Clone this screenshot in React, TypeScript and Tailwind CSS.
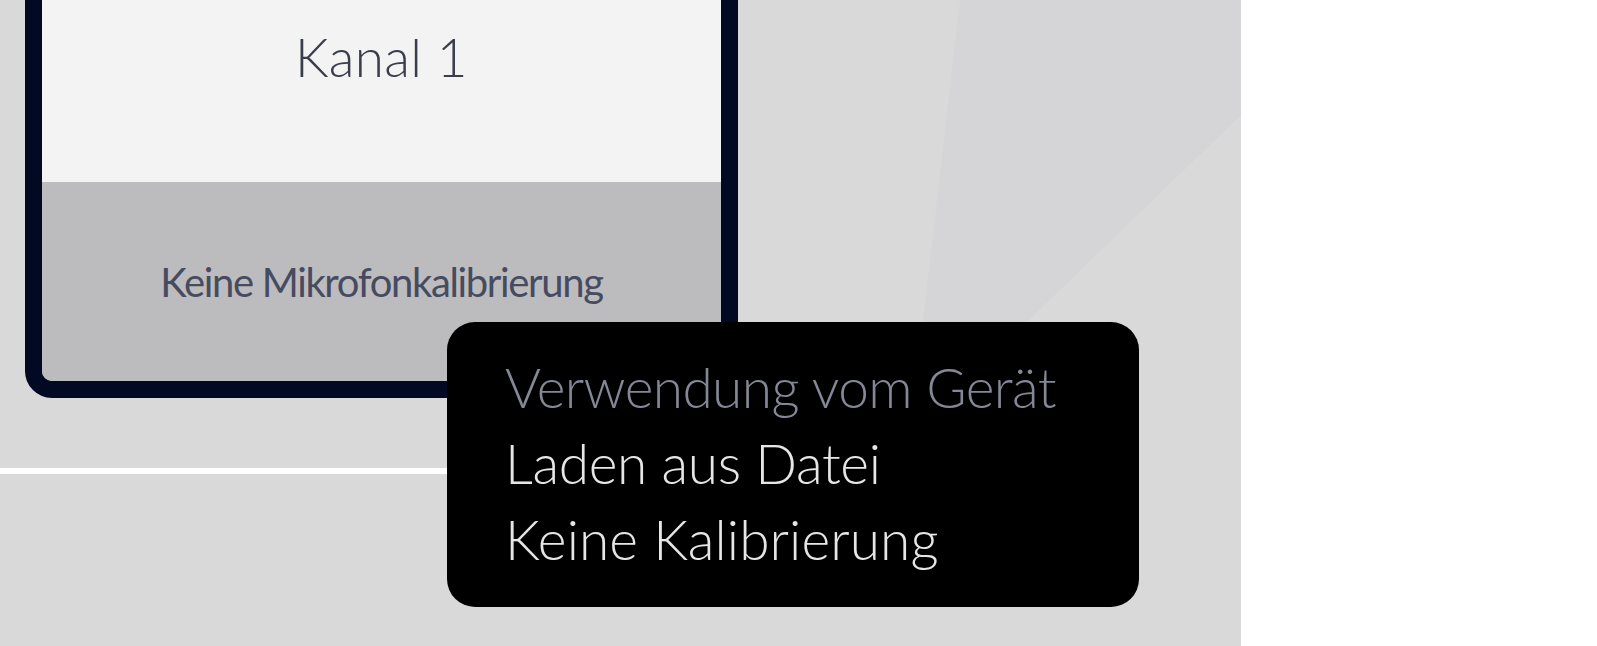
import React from "react";

export default function App() {
  return (
    <div className="flex h-[646px] w-full bg-white font-['Lato',_sans-serif]">
      <div className="relative flex h-full w-[1241px] shrink-0 flex-col overflow-hidden bg-[#d9d9d9]">
        <svg
          className="absolute left-0 top-0"
          width="1241"
          height="646"
          viewBox="0 0 1241 646"
        >
          <polygon points="960,0 1241,0 1241,115 910,435" fill="#d5d4d7" />
        </svg>

        <div className="relative -mt-[39px] ml-[25px] flex w-[713px] flex-col overflow-hidden rounded-[27px] border-[17px] border-[#020922]">
          <div className="flex h-[204px] justify-center bg-[#f3f3f3] pt-[52px]">
            <span className="text-[53px] font-light leading-[53px] tracking-[0.3px] text-[#393d4c]">
              Kanal 1
            </span>
          </div>
          <div className="flex h-[199px] items-center justify-center bg-[#bcbcbe]">
            <span className="text-[40px] leading-[40px] tracking-[-1.35px] text-[#474b60]">
              Keine Mikrofonkalibrierung
            </span>
          </div>
        </div>

        <div className="relative mt-[70px] h-[6px] w-[460px] bg-white" />

        <div className="absolute left-[447px] top-[322px] flex h-[285px] w-[692px] flex-col rounded-[28px] bg-black pl-[58px] pt-[27px]">
          <div className="text-[55px] font-light leading-[76px] tracking-[-0.6px] text-[#848795]">
            Verwendung vom Gerät
          </div>
          <div className="text-[55px] font-light leading-[76px] tracking-[-0.35px] text-[#e6e6e6]">
            Laden aus Datei
          </div>
          <div className="text-[55px] font-light leading-[76px] tracking-[0.1px] text-[#e6e6e6]">
            Keine Kalibrierung
          </div>
        </div>
      </div>
      <div className="flex-1 bg-white" />
    </div>
  );
}
